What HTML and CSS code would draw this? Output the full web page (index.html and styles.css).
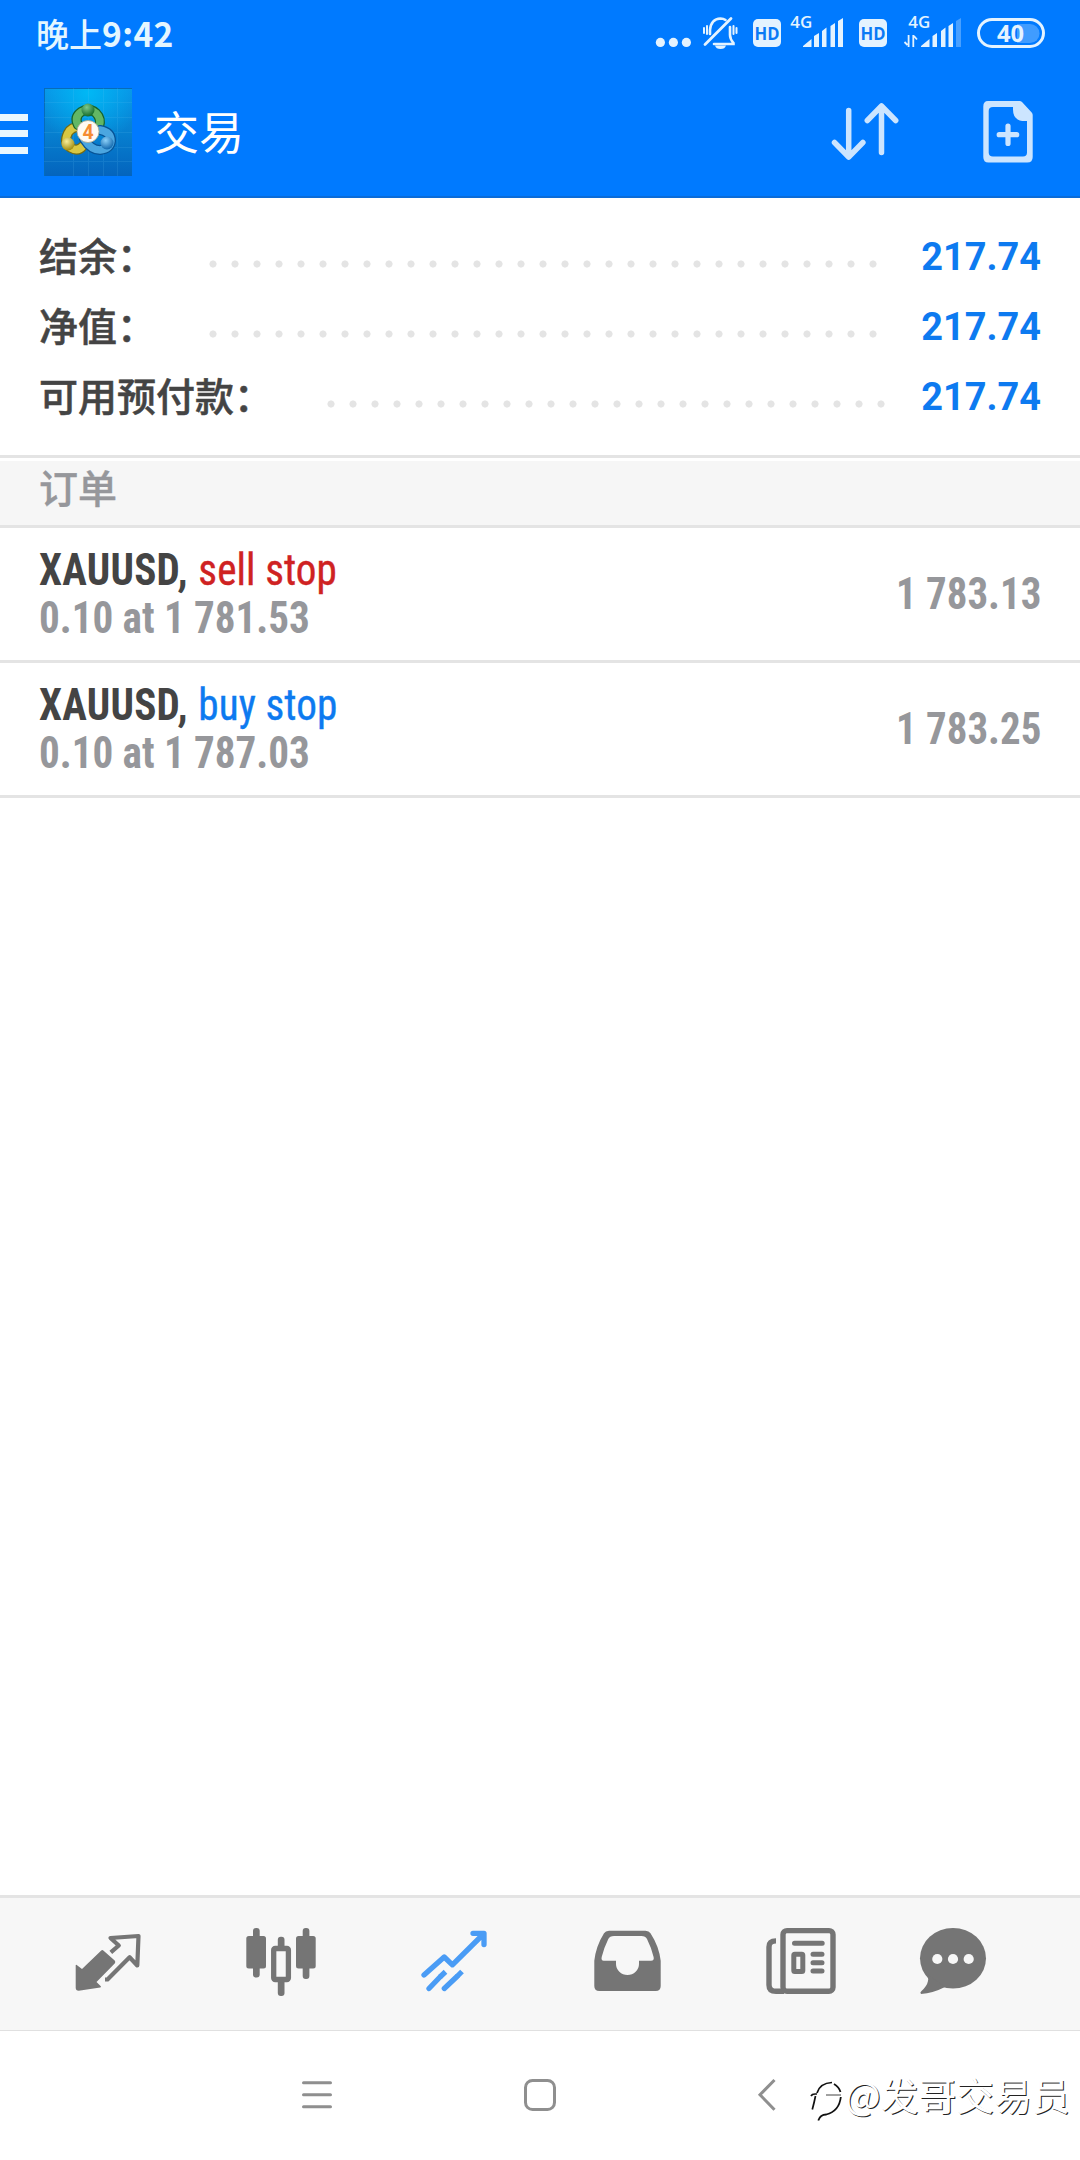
FILE: index.html
```html
<!DOCTYPE html>
<html lang="zh-CN">
<head>
<meta charset="utf-8">
<title>交易</title>
<link rel="stylesheet" href="styles.css">
</head>
<body>
<div class="screen">
  <header class="header">
    <div class="status">
      <span class="clock">晚上<b>9:42</b></span>
      <svg class="status-icons" width="400" height="66" viewBox="650 0 400 66">
        <g fill="#e4f3ff">
          <circle cx="660.4" cy="42.4" r="4.6"/><circle cx="673.4" cy="42.4" r="4.6"/><circle cx="686.4" cy="42.4" r="4.6"/>
          <path d="M715 45.500h11q-1 3.500-5.500 3.500t-5.500-3.500z"/>
          <rect x="753" y="19" width="28" height="28" rx="5"/>
          <rect x="859" y="19" width="28" height="28" rx="5"/>
          <path d="M803 47v-1l8.500-7v8zM814 47V36l5-3v14zM822 47V31l4.500-3.500V47zM830.500 47V26l4.500-3v24zM838 47V21l5-3v29z"/>
          <path d="M921 47v-1l8.500-7v8zM932.500 47V36l4.500-3v14zM941 47V31l4.500-3.500V47zM948.500 47V26l4.500-3v24z"/>
          <path d="M956 47V21l5-3v29z" opacity=".32"/>
        </g>
        <g fill="none" stroke="#e4f3ff" stroke-linecap="round">
          <path stroke-width="2.800" d="M705 44.500L731 18.500"/>
          <path stroke-width="2.600" d="M710 34V30q1-11 10.500-11.500 3 0 5 1.500M730 27v8q0 4 3.500 8v1H714" />
          <path stroke-width="2" d="M704 28v5M707 26v8M733.500 26v8M736.500 28v5"/>
          <path stroke-width="1.800" stroke-linecap="butt" d="M904.500 42l3 3M908.600 35v12M913.300 47V35M914 36l3 3.500"/>
          <rect x="978.5" y="19.500" width="65" height="27" rx="13.500" stroke-width="3"/>
        </g>
        <path d="M1017 24h13a9.500 9.500 0 0 1 0 19h-13z" fill="#409cff"/>
        <g font-family="Open Sans, Noto Sans, sans-serif" font-weight="600">
          <g fill="#0a7af5" font-size="18" font-weight="700" text-anchor="middle"><text x="767" y="40" textLength="25" lengthAdjust="spacingAndGlyphs">HD</text><text x="873" y="40" textLength="25" lengthAdjust="spacingAndGlyphs">HD</text></g>
          <g fill="#e4f3ff" font-size="16"><text x="790.300" y="28" textLength="22" lengthAdjust="spacingAndGlyphs">4G</text><text x="908.300" y="28" textLength="22" lengthAdjust="spacingAndGlyphs">4G</text></g>
          <text x="997" y="41.700" fill="#e4f3ff" font-size="24" font-weight="700" textLength="27" lengthAdjust="spacingAndGlyphs">40</text>
        </g>
      </svg>
    </div>
    <div class="toolbar">
      <div class="burger"><i></i><i></i><i></i></div>
      <svg class="logo" width="88" height="88" viewBox="0 0 88 88">
        <defs>
          <linearGradient id="sky" x1="0" y1="0" x2="0" y2="1"><stop offset="0" stop-color="#0a92e6"/><stop offset=".5" stop-color="#0680d0"/><stop offset="1" stop-color="#0464bd"/></linearGradient>
          <radialGradient id="glow" cx=".5" cy=".05" r=".6"><stop offset="0" stop-color="#00b8f5"/><stop offset="1" stop-color="#00b8f5" stop-opacity="0"/></radialGradient>
          <radialGradient id="g" cx=".4" cy=".3" r=".7"><stop offset="0" stop-color="#7dc98c"/><stop offset="1" stop-color="#146b2a"/></radialGradient>
          <radialGradient id="y" cx=".4" cy=".3" r=".7"><stop offset="0" stop-color="#f8ee9a"/><stop offset="1" stop-color="#a08c10"/></radialGradient>
          <radialGradient id="b" cx=".4" cy=".3" r=".7"><stop offset="0" stop-color="#8cd0f8"/><stop offset="1" stop-color="#1268ae"/></radialGradient>
        </defs>
        <rect width="88" height="88" fill="url(#sky)"/><rect width="88" height="88" fill="url(#glow)"/>
        <path d="M.5 0v88M0 .5h88" stroke="#076cb8"/>
        <path d="M29.500 0v88M44.500 0v88M59.500 0v88M73.500 0v88M0 14.500h88M0 29.500h88M0 44.500h88M0 59.500h88M0 73.500h88" stroke="#6cc8f5" opacity=".14"/>
        <g fill="none" stroke-linecap="round">
          <path d="M39 58q-5 6-12 2-8-5-3-15 4-7 13-6" stroke="#756b12" stroke-width="10"/>
          <path d="M39 58q-5 6-12 2-8-5-3-15 4-7 13-6" stroke="#d8c742" stroke-width="7.500"/>
          <path d="M34 37q-4-8 3-13 8-5 15 1 6 6 3 14" stroke="#17632b" stroke-width="10"/>
          <path d="M34 37q-4-8 3-13 8-5 15 1 6 6 3 14" stroke="#62b765" stroke-width="7.500"/>
          <path d="M56 42q11 2 11 11-1 8-11 9-9 0-16-11" stroke="#075396" stroke-width="10"/>
          <path d="M56 42q11 2 11 11-1 8-11 9-9 0-16-11" stroke="#4ba6e0" stroke-width="7.500"/>
        </g>
        <circle cx="44" cy="22" r="6.500" fill="url(#g)"/><circle cx="24" cy="56" r="6.500" fill="url(#y)"/><circle cx="63" cy="55" r="6.500" fill="url(#b)"/>
        <circle cx="44" cy="43.500" r="11" fill="#fffaf3" stroke="#a7a58b" stroke-width=".8"/>
        <text x="44" y="50.500" text-anchor="middle" font-family="Roboto, sans-serif" font-weight="700" font-size="19.500" fill="#f58c32">4</text>
      </svg>
      <h1 class="title">交易</h1>
      <svg class="actions" width="210" height="80" viewBox="828 94 210 80" fill="none" stroke="#cce5ff" stroke-linecap="round" stroke-linejoin="round">
        <path stroke-width="5.500" d="M848.700 110.500V157M834.500 142.500l14.200 14.500 14.200-14.500M881.500 152.500V106M867.300 120.500l14.200-14.500 14.200 14.500"/>
        <path fill="#cce5ff" fill-rule="evenodd" stroke="none" d="M988 101h31.500q1.500 0 2.500 1l9.700 10.500q1 1 1 2.500v42q0 5.500-5.500 5.500h-38.700q-5.200 0-5.200-5.500v-50.500q0-5.500 4.700-5.500zM993 107q-4.300 0-4.300 4v41.500q0 4 4.300 4h30q4 0 4-4v-31.500h-2q-12 0-12-11.500v-2.500z"/>
        <path stroke-width="5.200" d="M1008 126v17.500M999.200 134.700h17.500"/>
      </svg>
    </div>
  </header>

  <section class="summary">
    <div class="sum-row"><span class="label">结余：</span><span class="dots"></span><span class="value">217.74</span></div>
    <div class="sum-row"><span class="label">净值：</span><span class="dots"></span><span class="value">217.74</span></div>
    <div class="sum-row wide"><span class="label">可用预付款：</span><span class="dots"></span><span class="value">217.74</span></div>
  </section>

  <h2 class="section">订单</h2>
  <main class="orders">
    <div class="order">
      <div class="info"><p><b>XAUUSD,</b> <span class="sell">sell stop</span></p><p class="detail">0.10 at 1 781.53</p></div>
      <div class="price">1 783.13</div>
    </div>
    <div class="order">
      <div class="info"><p><b>XAUUSD,</b> <span class="buy">buy stop</span></p><p class="detail">0.10 at 1 787.03</p></div>
      <div class="price">1 783.25</div>
    </div>
  </main>

  <nav class="tabs">
    <svg viewBox="0 0 80 80"><path fill="#757575" d="M7.700 41.500q0-1 1-.5L14 45l19-18.300q1.300-1.200 2.600 0L46.700 36.500q1.300 1.600 0 3L28.500 58l4.300 4.200q.6 1-.6 1.400l-21.500 3.200q-3 0-3-3z"/><path fill="none" stroke="#757575" stroke-width="4.200" stroke-linejoin="round" d="M42.800 28.300l8-6.800L42.500 14l28-2L69.300 41.500l-7.700-8.300L39.500 55.500h-2.500"/></svg>
    <svg viewBox="0 0 80 80" fill="#757575"><rect x="12" y="4" width="6.700" height="49.500" rx="3"/><rect x="5.300" y="12" width="19.700" height="32.500" rx="2.500"/><rect x="61.700" y="4" width="6.700" height="51" rx="3"/><rect x="55" y="12" width="19.700" height="32.500" rx="2.500"/><rect x="36.800" y="12.700" width="6.700" height="13" rx="3"/><rect x="36.800" y="54" width="6.700" height="18" rx="3"/><rect x="32.700" y="24.500" width="14.700" height="31" rx="1.500" fill="none" stroke="#757575" stroke-width="5.300"/></svg>
    <svg viewBox="0 0 80 80" fill="none" stroke="#4a9cf5" stroke-width="5.300" stroke-linecap="round" stroke-linejoin="round"><path d="M10 51l20.200-18 8.200 7.800L69.500 10M59 9.300h11v11.200"/><path d="M15 64.500L26 53M30.300 64.500L43 52.500"/><path stroke-linecap="butt" d="M26 53l5.500-5.200M43 52.500l5-5"/></svg>
    <svg viewBox="0 0 80 80"><path fill="#757575" fill-rule="evenodd" d="M22 6.700h36.500q3.500 0 5 2.500 8.500 13 10.200 27.500V62q0 5-5 5H12.300q-5 0-5-5V36.700Q9 22 17 9.200q1.500-2.500 5-2.500zM27 12q-4.300 0-5.700 3-4 8-6.600 18-.8 3.700 2 3.700H29V40a11.500 11 0 0 0 23 0v-3.300h12q3.500 0 2.600-3.700-2.500-10-6.600-18-1.400-3-5.700-3z"/></svg>
    <svg viewBox="0 0 80 80" fill="none" stroke="#757575" stroke-width="5.400"><rect x="23" y="6.600" width="50" height="60.700" rx="4"/><path d="M16 16.900q-7 0-7 6v38q0 6.400 7 6.400h8"/><g stroke-linecap="round" stroke-width="5"><path d="M34.500 19.300h27.700M53 30.300h9M53 38.700h9M53 47h9"/></g><rect x="33.800" y="30.200" width="9" height="17.300" rx="1" stroke-width="5"/></svg>
    <svg class="last" viewBox="0 0 80 80"><ellipse cx="41" cy="34.300" rx="33" ry="30.300" fill="#757575"/><path fill="#757575" d="M12 48q5 4 4 9-1 5-6.500 10-2 1.700-.5 3 12-.8 24-7z"/><g fill="#f7f7f7"><circle cx="25.300" cy="35" r="5.100"/><circle cx="41" cy="35" r="5.100"/><circle cx="56.700" cy="35" r="5.100"/></g></svg>
  </nav>

  <footer class="system">
    <svg class="keys" width="484" height="129" viewBox="300 2031 484 129" fill="none" stroke="#8f8f8f" stroke-width="3" stroke-linecap="round">
      <path d="M303.500 2082.700h27M303.500 2094.700h27M303.500 2106.700h27"/>
      <rect x="525.500" y="2080.500" width="29" height="29" rx="7"/>
      <path stroke-linecap="butt" d="M774.500 2080l-14.500 14.800 14.500 15"/>
    </svg>
    <div class="watermark">
      <svg width="36" height="46" viewBox="808 2080 36 46" fill="none" stroke="#111" stroke-width="2"><path stroke-width="1.700" d="M817 2095q3-10 15-10.500M811 2098q1-2 4-2h2M815.500 2098q-1.200 6-3.200 13.500"/><path stroke-width=".8" d="M826 2097h15"/><path stroke-width="1.800" d="M834 2086q5 3 6.500 8M840.800 2099q-1.500 14-14.500 17.500-6 0-8 6"/></svg>
      <span>@发哥交易员</span>
    </div>
  </footer>
</div>
</body>
</html>
```
FILE: styles.css
```css
* { box-sizing: border-box; margin: 0; padding: 0; }
body { background: #fff; font-family: Roboto, "Noto Sans CJK SC", sans-serif; color: #444; }
svg { display: block; flex: none; }
.screen { width: 1080px; height: 2160px; display: flex; flex-direction: column; overflow: hidden; }

.header { height: 198px; background: #007aff; border-bottom: 2px solid #0b6cd8; }
.status { height: 66px; display: flex; justify-content: space-between; padding: 0 30px 0 36px; }
.clock { font: 500 33px/66px "Noto Sans CJK SC", sans-serif; color: #e4f6ff; white-space: nowrap; }
.clock b { font-weight: 700; font-size: 33.500px; letter-spacing: .4px; }
.toolbar { display: flex; align-items: center; height: 132px; }
.burger { width: 28px; display: flex; flex-direction: column; gap: 9.500px; margin-right: 16px; padding-top: 3px; }
.burger i { height: 7px; background: #e9f7ff; }
.title { flex: 1; margin: -3px 0 0 22px; font: 400 45px/60px "Noto Sans CJK SC", sans-serif; color: #fff; }
.actions { margin-right: 42px; margin-top: 4px; }

.summary { height: 257px; padding: 21px 39px 0 39px; }
.sum-row { display: flex; align-items: center; height: 70px; }
.label { width: 171px; font: 500 39px/70px "Noto Sans CJK SC", sans-serif; white-space: nowrap; -webkit-text-stroke: .5px #444; }
.dots { width: 682px; height: 22px; margin: 20px 0 0 -8px; background: radial-gradient(circle at 50% 50%, #e4e4e4 3.200px, transparent 3.900px) 0 0 / 22px 22px repeat-x; }
.wide .label { width: 289px; }
.wide .dots { width: 572px; }
.value { flex: 1; display: flex; justify-content: flex-end; font: 700 39px/70px Roboto, sans-serif; color: #0d7af0; padding-top: 6px; transform: scaleX(.972); transform-origin: right; }

.section { height: 73px; border-top: 3px solid #e4e4e4; border-bottom: 3px solid #e4e4e4; background: linear-gradient(#fff 3px, #f6f6f6 3px); padding-left: 39px; font: 500 39px/56px "Noto Sans CJK SC", sans-serif; color: #96979b; -webkit-text-stroke: .4px #96979b; }

.orders { flex: 1; font: 400 44px/48px "Roboto Condensed", Roboto, sans-serif; font-stretch: 75%; }
.order { height: 135px; border-bottom: 3px solid #e4e4e4; display: flex; justify-content: space-between; align-items: center; padding: 0 39px; }
.info { transform: scaleX(.935); transform-origin: left; white-space: nowrap; }
.info b { letter-spacing: .25px; }
.info span { margin-left: 1px; letter-spacing: .1px; -webkit-text-stroke: .4px currentColor; }
.sell { color: #cf2222; }
.buy { color: #0d7af0; }
.detail, .price { font-weight: 700; color: #96979b; }
.detail { letter-spacing: -.05px; }
.price { transform: scaleX(.93); transform-origin: right; }

.tabs { height: 136px; border-top: 3px solid #e4e4e4; border-bottom: 1px solid #e0e0e0; background: #f7f7f7; display: flex; align-items: center; gap: 93px; padding-left: 68px; }
.tabs svg { width: 80px; height: 80px; }
.tabs .last { margin-left: -21px; }

.system { height: 129px; display: flex; padding-left: 300px; }
.watermark { display: flex; align-items: center; margin-left: 24px; padding-top: 10px; }
.watermark span { font: 400 37.800px/48px "Noto Sans CJK SC", sans-serif; color: #fff; text-shadow: 1px 1px .6px #222; white-space: nowrap; margin: -13px 0 0 1px; }
```
